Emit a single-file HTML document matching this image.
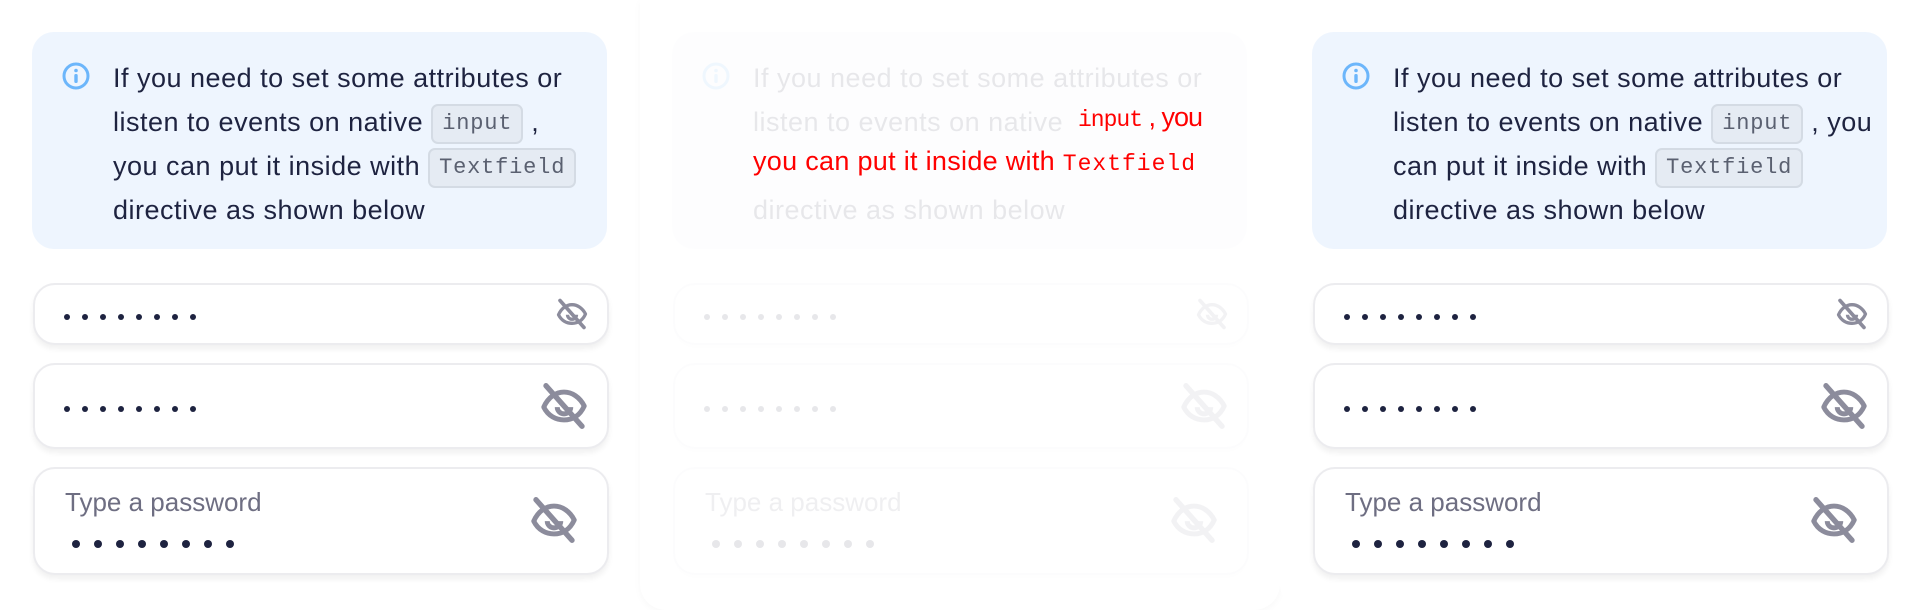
<!DOCTYPE html>
<html><head><meta charset="utf-8"><style>
html,body{margin:0;padding:0;background:#fff;}
body{width:1920px;height:610px;position:relative;overflow:hidden;font-family:"Liberation Sans",sans-serif;}
.panel{position:absolute;top:0;width:640px;height:610px;background:#fff;border-radius:0 0 26px 26px;}
.info{position:absolute;left:32px;top:32px;width:575px;height:217px;background:#eef5fe;border-radius:22px;}
.ico{position:absolute;left:62px;top:62px;}
.txt{position:absolute;left:113px;top:56px;font-size:27px;line-height:44px;color:#1e2340;letter-spacing:0.5px;white-space:nowrap;}
.code{display:inline-block;font-family:"Liberation Mono",monospace;font-size:22px;letter-spacing:0.8px;line-height:36px;padding:0 9px;background:#e5ebf3;border:2px solid #d4dbe4;border-radius:7px;color:#5a6070;vertical-align:middle;}
.f{position:absolute;left:33px;width:572px;background:#fff;border:2px solid #ececef;border-radius:22px;box-shadow:0 4px 6px rgba(0,0,0,0.06);}
.lbl{position:absolute;left:30px;top:18px;font-size:26px;color:#6e6e82;}
.eye{position:absolute;}
</style></head><body>

<svg width="0" height="0" style="position:absolute">
<defs>
<g id="eo"><path d="M3 12.5 C5 8 8.5 5.8 12 5.8 S19 8 21 12 C19 16.5 15.5 18.2 12 18.2 S5 16.5 3 12.5Z" fill="none" stroke="#8c8c9c" stroke-width="2.2" stroke-linejoin="round"/><path d="M9 12.5 A3 3 0 0 0 15 12.5" fill="none" stroke="#8c8c9c" stroke-width="2.2"/><path d="M4 3 L20 21" stroke="#8c8c9c" stroke-width="2.4" stroke-linecap="round"/></g>
</defs></svg>

<div class="panel" style="left:0">
 <div class="info"></div>
 <svg class="ico" width="28" height="28" viewBox="0 0 28 28"><circle cx="14" cy="14" r="12" fill="none" stroke="#6cb6fb" stroke-width="3"/><circle cx="14" cy="8.5" r="1.8" fill="#6cb6fb"/><rect x="12.3" y="12" width="3.4" height="9" rx="1.5" fill="#6cb6fb"/></svg>
 <div class="txt">If you need to set some attributes or<br>listen to events on native <span class="code">input</span> ,<br>you can put it inside with <span class="code">Textfield</span><br>directive as shown below</div>
 <div class="f" style="top:283px;height:58px"><svg style="position:absolute;left:29px;top:29px" width="140" height="8"><g fill="#1e2340"><circle cx="3" cy="3" r="3"/><circle cx="21" cy="3" r="3"/><circle cx="39" cy="3" r="3"/><circle cx="57" cy="3" r="3"/><circle cx="75" cy="3" r="3"/><circle cx="93" cy="3" r="3"/><circle cx="111" cy="3" r="3"/><circle cx="129" cy="3" r="3"/></g></svg>
 <svg class="eye" style="left:519px;top:11px" width="36" height="36" viewBox="0 0 24 24"><use href="#eo"/></svg></div>
 <div class="f" style="top:363px;height:82px"><svg style="position:absolute;left:29px;top:41px" width="140" height="8"><g fill="#1e2340"><circle cx="3" cy="3" r="3"/><circle cx="21" cy="3" r="3"/><circle cx="39" cy="3" r="3"/><circle cx="57" cy="3" r="3"/><circle cx="75" cy="3" r="3"/><circle cx="93" cy="3" r="3"/><circle cx="111" cy="3" r="3"/><circle cx="129" cy="3" r="3"/></g></svg>
 <svg class="eye" style="left:502px;top:14px" width="54" height="54" viewBox="0 0 24 24"><use href="#eo"/></svg></div>
 <div class="f" style="top:467px;height:104px"><div class="lbl">Type a password</div><svg style="position:absolute;left:37px;top:71px" width="170" height="10"><g fill="#1e2340"><circle cx="4" cy="4" r="4"/><circle cx="26" cy="4" r="4"/><circle cx="48" cy="4" r="4"/><circle cx="70" cy="4" r="4"/><circle cx="92" cy="4" r="4"/><circle cx="114" cy="4" r="4"/><circle cx="136" cy="4" r="4"/><circle cx="158" cy="4" r="4"/></g></svg>
 <svg class="eye" style="left:492px;top:24px" width="54" height="54" viewBox="0 0 24 24"><use href="#eo"/></svg></div>
</div>

<div class="panel" style="left:640px;box-shadow:0 2px 8px rgba(0,0,0,0.03)">
 <div style="position:absolute;left:0;top:0;width:640px;height:610px;opacity:0.1">
 <div class="info"></div>
 <svg class="ico" width="28" height="28" viewBox="0 0 28 28"><circle cx="14" cy="14" r="12" fill="none" stroke="#6cb6fb" stroke-width="3"/><circle cx="14" cy="8.5" r="1.8" fill="#6cb6fb"/><rect x="12.3" y="12" width="3.4" height="9" rx="1.5" fill="#6cb6fb"/></svg>
 <div class="txt">If you need to set some attributes or<br>listen to events on native <span class="code" style="color:transparent;background:transparent;border-color:transparent">input</span><br>&nbsp;<br>directive as shown below</div>
 <div class="f" style="top:283px;height:58px"><svg style="position:absolute;left:29px;top:29px" width="140" height="8"><g fill="#1e2340"><circle cx="3" cy="3" r="3"/><circle cx="21" cy="3" r="3"/><circle cx="39" cy="3" r="3"/><circle cx="57" cy="3" r="3"/><circle cx="75" cy="3" r="3"/><circle cx="93" cy="3" r="3"/><circle cx="111" cy="3" r="3"/><circle cx="129" cy="3" r="3"/></g></svg>
 <svg class="eye" style="left:519px;top:11px" width="36" height="36" viewBox="0 0 24 24"><use href="#eo"/></svg></div>
 <div class="f" style="top:363px;height:82px"><svg style="position:absolute;left:29px;top:41px" width="140" height="8"><g fill="#1e2340"><circle cx="3" cy="3" r="3"/><circle cx="21" cy="3" r="3"/><circle cx="39" cy="3" r="3"/><circle cx="57" cy="3" r="3"/><circle cx="75" cy="3" r="3"/><circle cx="93" cy="3" r="3"/><circle cx="111" cy="3" r="3"/><circle cx="129" cy="3" r="3"/></g></svg>
 <svg class="eye" style="left:502px;top:14px" width="54" height="54" viewBox="0 0 24 24"><use href="#eo"/></svg></div>
 <div class="f" style="top:467px;height:104px"><div class="lbl">Type a password</div><svg style="position:absolute;left:37px;top:71px" width="170" height="10"><g fill="#1e2340"><circle cx="4" cy="4" r="4"/><circle cx="26" cy="4" r="4"/><circle cx="48" cy="4" r="4"/><circle cx="70" cy="4" r="4"/><circle cx="92" cy="4" r="4"/><circle cx="114" cy="4" r="4"/><circle cx="136" cy="4" r="4"/><circle cx="158" cy="4" r="4"/></g></svg>
 <svg class="eye" style="left:492px;top:24px" width="54" height="54" viewBox="0 0 24 24"><use href="#eo"/></svg></div>
 </div>
 <div style="position:absolute;left:438px;top:102px;font-size:27px;color:#ff0000;white-space:nowrap;letter-spacing:-1px"><span style="font-family:'Liberation Mono',monospace;font-size:23px">input</span> , you</div>
 <div style="position:absolute;left:113px;top:146px;font-size:27px;color:#ff0000;white-space:nowrap;letter-spacing:0.3px">you can put it inside with <span style="font-family:'Liberation Mono',monospace;font-size:23px;letter-spacing:1px">Textfield</span></div>
</div>

<div class="panel" style="left:1280px">
 <div class="info"></div>
 <svg class="ico" width="28" height="28" viewBox="0 0 28 28"><circle cx="14" cy="14" r="12" fill="none" stroke="#6cb6fb" stroke-width="3"/><circle cx="14" cy="8.5" r="1.8" fill="#6cb6fb"/><rect x="12.3" y="12" width="3.4" height="9" rx="1.5" fill="#6cb6fb"/></svg>
 <div class="txt">If you need to set some attributes or<br>listen to events on native <span class="code">input</span> , you<br>can put it inside with <span class="code">Textfield</span><br>directive as shown below</div>
 <div class="f" style="top:283px;height:58px"><svg style="position:absolute;left:29px;top:29px" width="140" height="8"><g fill="#1e2340"><circle cx="3" cy="3" r="3"/><circle cx="21" cy="3" r="3"/><circle cx="39" cy="3" r="3"/><circle cx="57" cy="3" r="3"/><circle cx="75" cy="3" r="3"/><circle cx="93" cy="3" r="3"/><circle cx="111" cy="3" r="3"/><circle cx="129" cy="3" r="3"/></g></svg>
 <svg class="eye" style="left:519px;top:11px" width="36" height="36" viewBox="0 0 24 24"><use href="#eo"/></svg></div>
 <div class="f" style="top:363px;height:82px"><svg style="position:absolute;left:29px;top:41px" width="140" height="8"><g fill="#1e2340"><circle cx="3" cy="3" r="3"/><circle cx="21" cy="3" r="3"/><circle cx="39" cy="3" r="3"/><circle cx="57" cy="3" r="3"/><circle cx="75" cy="3" r="3"/><circle cx="93" cy="3" r="3"/><circle cx="111" cy="3" r="3"/><circle cx="129" cy="3" r="3"/></g></svg>
 <svg class="eye" style="left:502px;top:14px" width="54" height="54" viewBox="0 0 24 24"><use href="#eo"/></svg></div>
 <div class="f" style="top:467px;height:104px"><div class="lbl">Type a password</div><svg style="position:absolute;left:37px;top:71px" width="170" height="10"><g fill="#1e2340"><circle cx="4" cy="4" r="4"/><circle cx="26" cy="4" r="4"/><circle cx="48" cy="4" r="4"/><circle cx="70" cy="4" r="4"/><circle cx="92" cy="4" r="4"/><circle cx="114" cy="4" r="4"/><circle cx="136" cy="4" r="4"/><circle cx="158" cy="4" r="4"/></g></svg>
 <svg class="eye" style="left:492px;top:24px" width="54" height="54" viewBox="0 0 24 24"><use href="#eo"/></svg></div>
</div>
</body></html>
